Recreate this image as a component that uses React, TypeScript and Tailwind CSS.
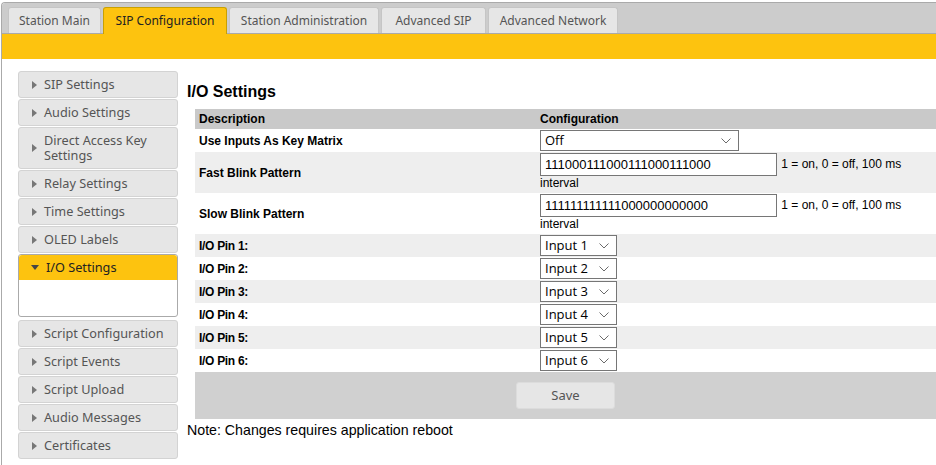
import { useState } from 'react';

const tabs = [
  { label: 'Station Main', w: 'w-[93px]' },
  { label: 'SIP Configuration', w: 'w-[124px]' },
  { label: 'Station Administration', w: 'w-[150px]' },
  { label: 'Advanced SIP', w: 'w-[105px]' },
  { label: 'Advanced Network', w: 'w-[130px]' },
];

const menuTop = ['SIP Settings', 'Audio Settings', 'Direct Access Key Settings', 'Relay Settings', 'Time Settings', 'OLED Labels'];
const menuBottom = ['Script Configuration', 'Script Events', 'Script Upload', 'Audio Messages', 'Certificates'];

function Chevron() {
  return (
    <svg width="10" height="6" viewBox="0 0 10 6" className="pointer-events-none absolute right-[8px] top-1/2 -translate-y-1/2">
      <path d="M0.5 0.5 L5 5 L9.5 0.5" fill="none" stroke="#6b6b6b" strokeWidth="1" />
    </svg>
  );
}

function Select({ value, options, width }: { value: string; options: string[]; width: string }) {
  const [v, setV] = useState(value);
  return (
    <span className={`relative inline-block align-middle ${width}`}>
      <select
        value={v}
        onChange={(e) => setV(e.target.value)}
        className="h-[21px] w-full appearance-none border border-[#767676] bg-white pl-[4px] pr-[20px] text-[13px] leading-[19px] text-black outline-none"
        style={{ fontFamily: '"Open Sans", "Noto Sans", sans-serif' }}
      >
        {options.map((o) => (
          <option key={o}>{o}</option>
        ))}
      </select>
      <Chevron />
    </span>
  );
}

function Arrow({ open }: { open?: boolean }) {
  return open ? (
    <svg width="8" height="5" viewBox="0 0 8 5" className="mr-[7px] shrink-0">
      <path d="M0 0 L8 0 L4 5 Z" fill="#454545" />
    </svg>
  ) : (
    <svg width="5" height="8" viewBox="0 0 5 8" className="mr-[7px] shrink-0">
      <path d="M0 0 L5 4 L0 8 Z" fill="#777" />
    </svg>
  );
}

function MenuItem({ label }: { label: string }) {
  return (
    <div className="flex items-center rounded-[3px] border border-[#d3d3d3] bg-[#e6e6e6] py-[5px] pl-[13px] pr-[8px] text-[12.7px] leading-[15px] text-[#555]">
      <Arrow />
      <span>{label === 'Direct Access Key Settings' ? <>Direct Access Key<br />Settings</> : label}</span>
    </div>
  );
}

export default function App() {
  const [fast, setFast] = useState('111000111000111000111000');
  const [slow, setSlow] = useState('111111111111000000000000');
  const pins = [1, 2, 3, 4, 5, 6];
  const inputOpts = ['Input 1', 'Input 2', 'Input 3', 'Input 4', 'Input 5', 'Input 6'];

  return (
    <div className="h-[465px] w-[936px] overflow-hidden bg-white" style={{ fontFamily: '"Noto Sans", sans-serif' }}>
      <div className="ml-px mt-[2px] h-full w-[960px] rounded-tl-[4px] border-l border-t border-[#aaa]">
        {/* tab bar */}
        <div className="flex h-[31px] items-end gap-[2px] rounded-tl-[3px] border-b border-[#aaa] bg-[#ccc] pl-[6px]">
          {tabs.map((t) =>
            t.label === 'SIP Configuration' ? (
              <div
                key={t.label}
                className={`mb-[-1px] flex h-[27px] ${t.w} items-center justify-center rounded-t-[3px] border border-b-0 border-[#c9a000] bg-[#fdc30f] text-[12px] text-[#222]`}
              >
                {t.label}
              </div>
            ) : (
              <div
                key={t.label}
                className={`flex h-[26px] ${t.w} items-center justify-center rounded-t-[3px] border border-b-0 border-[#c5c5c5] bg-[#e6e6e6] text-[12px] text-[#555]`}
              >
                {t.label}
              </div>
            )
          )}
        </div>
        <div className="h-[25px] bg-[#fdc30f]" />

        <div className="flex gap-[9px] pl-[16px] pt-[12px]">
          {/* sidebar */}
          <div className="flex w-[160px] shrink-0 flex-col gap-px">
            {menuTop.map((m) => (
              <MenuItem key={m} label={m} />
            ))}
            <div className="rounded-[3px] border border-[#aaa] bg-white">
              <div className="flex items-center rounded-t-[3px] bg-[#fdc30f] py-[5px] pl-[12px] text-[12.7px] leading-[15px] text-[#222]">
                <Arrow open />
                <span>I/O Settings</span>
              </div>
              <div className="h-[36px]" />
            </div>
            <div className="mt-[2px] flex flex-col gap-px">
              {menuBottom.map((m) => (
                <MenuItem key={m} label={m} />
              ))}
            </div>
          </div>

          {/* main */}
          <div className="flex-1" style={{ fontFamily: '"Liberation Sans", Arial, sans-serif' }}>
            <h2 className="mt-[12px] text-[16px] font-bold leading-[18px] text-black">I/O Settings</h2>
            <table className="ml-[8px] mt-[8px] w-[741px] table-fixed border-collapse text-[12px] text-black">
              <colgroup>
                <col className="w-[341px]" />
                <col />
              </colgroup>
              <thead>
                <tr className="h-[20px] bg-[#c9c9c9] text-left">
                  <th className="px-[4px] font-bold">Description</th>
                  <th className="px-[4px] font-bold">Configuration</th>
                </tr>
              </thead>
              <tbody>
                <tr className="h-[23px] bg-white">
                  <td className="px-[4px] font-bold">Use Inputs As Key Matrix</td>
                  <td className="px-[4px] py-px">
                    <Select value="Off" options={['Off', 'On']} width="w-[199px]" />
                  </td>
                </tr>
                <tr className="h-[41px] bg-[#eee]">
                  <td className="px-[4px] font-bold">Fast Blink Pattern</td>
                  <td className="px-[4px] pt-px pb-[2px] leading-[15px]">
                    <input
                      value={fast}
                      onChange={(e) => setFast(e.target.value)}
                      className="h-[23px] w-[237px] border border-[#767676] bg-white px-[4px] align-middle text-[13px] outline-none"
                    />{' '}
                    <span className="ml-[1px]">1 = on, 0 = off, 100 ms interval</span>
                  </td>
                </tr>
                <tr className="h-[41px] bg-white">
                  <td className="px-[4px] font-bold">Slow Blink Pattern</td>
                  <td className="px-[4px] pt-px pb-[2px] leading-[15px]">
                    <input
                      value={slow}
                      onChange={(e) => setSlow(e.target.value)}
                      className="h-[23px] w-[237px] border border-[#767676] bg-white px-[4px] align-middle text-[13px] outline-none"
                    />{' '}
                    <span className="ml-[1px]">1 = on, 0 = off, 100 ms interval</span>
                  </td>
                </tr>
                {pins.map((p) => (
                  <tr key={p} className={`h-[23px] ${p % 2 === 1 ? 'bg-[#eee]' : 'bg-white'}`}>
                    <td className="px-[4px] font-bold tracking-[-0.3px]">I/O Pin {p}:</td>
                    <td className="px-[4px] py-px">
                      <Select value={`Input ${p}`} options={inputOpts} width="w-[77px]" />
                    </td>
                  </tr>
                ))}
                <tr className="bg-[#d0d0d0]">
                  <td colSpan={2} className="py-[10px] text-center">
                    <button
                      className="h-[27px] w-[99px] rounded-[3px] border border-[#dcdcdc] bg-[#e6e6e6] text-[13px] text-[#555]"
                      style={{ fontFamily: '"Noto Sans", sans-serif' }}
                    >
                      Save
                    </button>
                  </td>
                </tr>
              </tbody>
            </table>
            <p className="mt-[2px] text-[14.2px] leading-[18px] text-black">Note: Changes requires application reboot</p>
          </div>
        </div>
      </div>
    </div>
  );
}
